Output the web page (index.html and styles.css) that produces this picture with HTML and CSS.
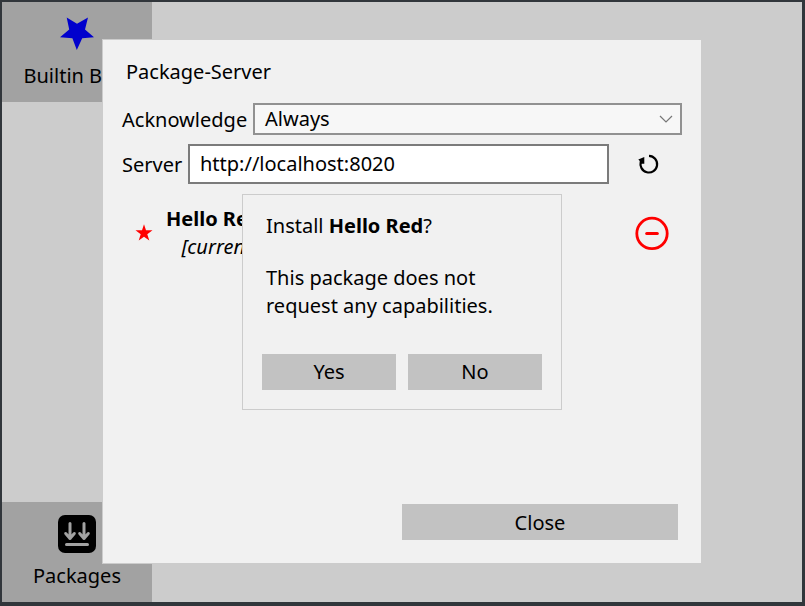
FILE: index.html
```
<!DOCTYPE html>
<html lang="en">
<head>
<meta charset="utf-8">
<title>Package-Server</title>
<link rel="stylesheet" href="styles.css">
</head>
<body>
<div class="desktop">
  <nav class="sidebar">
    <div class="tile">
      <svg class="tile-icon" width="40" height="40" viewBox="0 0 40 40"><path d="M9.700 3.500 20 9.700 31 3.500 28 15.500 37 23.200 25.200 24.200 19.800 36 15.400 24.200 3 23.200 12.200 15.500Z" fill="#0000cd"/></svg>
      <span class="tile-label tile-label-start">Builtin B</span>
    </div>
    <div class="tile">
      <svg class="tile-icon" width="40" height="40" viewBox="0 0 40 40"><rect x="1" y="1" width="38" height="38" rx="7" fill="#000"/><path d="M13 9.500V24.500M8.700 19.500 13 24.500l4.300-5M27 9.500V24.500M22.700 19.500 27 24.500l4.300-5M9.500 30.500h21" fill="none" stroke="#a2a2a2" stroke-width="3" stroke-linecap="round" stroke-linejoin="round"/></svg>
      <span class="tile-label">Packages</span>
    </div>
  </nav>
</div>

<section class="dialog">
  <h1 class="title">Package-Server</h1>
  <div class="row ack-row">
    <span class="ack-label">Acknowledge</span>
    <div class="select"><span>Always</span>
      <svg width="14" height="9" viewBox="0 0 14 9"><path d="M1 2 7 8 13 2" fill="none" stroke="#777" stroke-width="1.200"/></svg>
    </div>
  </div>
  <div class="row server-row">
    <span class="server-label">Server</span>
    <div class="input">http://localhost:8020</div>
    <svg class="reload" width="22" height="22" viewBox="0 0 22 22"><path d="M11 2.900a8.300 8.300 0 1 1-8 5.500" fill="none" stroke="#000" stroke-width="2.200"/><path d="M.3 6.500 6.300 4V10.800H1.800V8Z" fill="#000"/></svg>
  </div>
  <div class="package">
    <svg class="star" width="18" height="18" viewBox="0 0 18 18"><path d="M9 .3 11 6.200h6.500L12.300 10.200l2 6.300L9 12.800 3.700 16.500l2-6.300L.5 6.200H7Z" fill="#f00"/></svg>
    <div class="package-info"><b>Hello Red</b><i>[current]</i></div>
    <svg class="remove" width="34" height="34" viewBox="0 0 34 34"><circle cx="17" cy="17.400" r="15.200" fill="none" stroke="#f00" stroke-width="2.800"/><path d="M11.700 17.500h10.600" stroke="#f00" stroke-width="3" stroke-linecap="round"/></svg>
  </div>
  <button class="button close">Close</button>
</section>

<section class="confirm">
  <p>Install <b>Hello Red</b>?</p>
  <p class="message">This package does not<br>request any capabilities.</p>
  <div class="actions"><button class="button">Yes</button><button class="button">No</button></div>
</section>
</body>
</html>
```

FILE: styles.css
```
* { box-sizing: border-box; }
body {
  margin: 0;
  width: 805px;
  height: 606px;
  overflow: hidden;
  position: relative;
  background: #31363b;
  color: #000;
  font: 20px/28px "Noto Sans", sans-serif;
}
svg { display: block; flex: none; }
.desktop {
  width: 805px;
  height: 606px;
  border: solid #31363b;
  border-width: 2px 3px 4px 2px;
  background: #ccc;
}
.sidebar {
  width: 150px;
  height: 100%;
  display: flex;
  flex-direction: column;
  justify-content: space-between;
}
.tile {
  height: 100px;
  padding-top: 12px;
  display: flex;
  flex-direction: column;
  align-items: center;
  background: #a2a2a2;
}
.tile-label { margin-top: 8px; white-space: nowrap; }
.tile-label-start { align-self: flex-start; margin-left: 21.5px; }
.dialog {
  position: absolute;
  left: 102px;
  top: 39px;
  width: 600px;
  height: 525px;
  padding: 18px 19px 23px;
  border: 1px solid #ccc;
  background: #f1f1f1;
  display: flex;
  flex-direction: column;
}
.title { margin: 0 0 17px 4px; font: inherit; }
.row { display: flex; align-items: center; }
.ack-row { height: 31px; }
.ack-label { width: 131px; padding-top: 3px; }
.select {
  width: 429px;
  height: 32px;
  padding: 0 7px 0 10px;
  border: 2px solid #919191;
  background: #f7f7f7;
  display: flex;
  align-items: center;
  justify-content: space-between;
}
.server-row { height: 40px; margin-top: 10px; }
.server-label { width: 66px; padding-top: 1px; }
.input {
  width: 421px;
  height: 40px;
  padding: 4px 10px;
  border: 2px solid #7b7b7b;
  background: #fff;
}
.reload { margin-left: 29px; }
.package { display: flex; align-items: center; margin-top: 20px; height: 58px; }
.star { margin-left: 13px; }
.package-info { margin-left: 13px; width: 469px; display: flex; flex-direction: column; }
.package-info i { margin-left: 15.5px; }
.button {
  height: 36px;
  margin: 0;
  padding: 0;
  border: 0;
  background: #c2c2c2;
  color: #000;
  font: inherit;
}
.close { width: 276px; margin: auto 4px 0 auto; padding-top: 2px; }
.confirm {
  position: absolute;
  left: 242px;
  top: 194px;
  width: 320px;
  height: 216px;
  padding: 17px 19px 19px;
  border: 1px solid #ccc;
  background: #f1f1f1;
  display: flex;
  flex-direction: column;
}
.confirm p { margin: 0 4px; }
.confirm .message { margin-top: 24px; }
.actions { display: flex; gap: 12px; margin-top: auto; }
.actions .button { flex: 1; }
```
